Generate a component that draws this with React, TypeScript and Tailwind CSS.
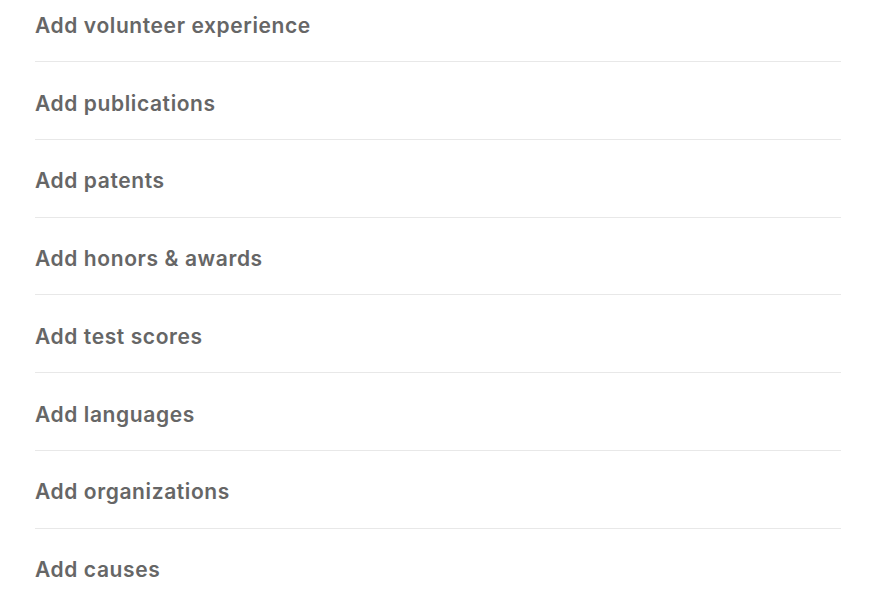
import React from "react";

const items = [
  "Add volunteer experience",
  "Add publications",
  "Add patents",
  "Add honors & awards",
  "Add test scores",
  "Add languages",
  "Add organizations",
  "Add causes",
];

export default function App() {
  return (
    <div className="w-[876px] h-[598px] overflow-hidden bg-white" style={{ fontFamily: 'Inter, "Liberation Sans", Arial, sans-serif' }}>
      <div className="px-[35px] -mt-[15.8px]">
        {items.map((t) => (
          <div key={t} className="pt-[29.5px] pb-[23.3px] border-b border-[#e8e8e8]">
            <div className="text-[21px] leading-[24px] font-semibold tracking-[0.6px] text-[#666666]">{t}</div>
          </div>
        ))}
      </div>
    </div>
  );
}
